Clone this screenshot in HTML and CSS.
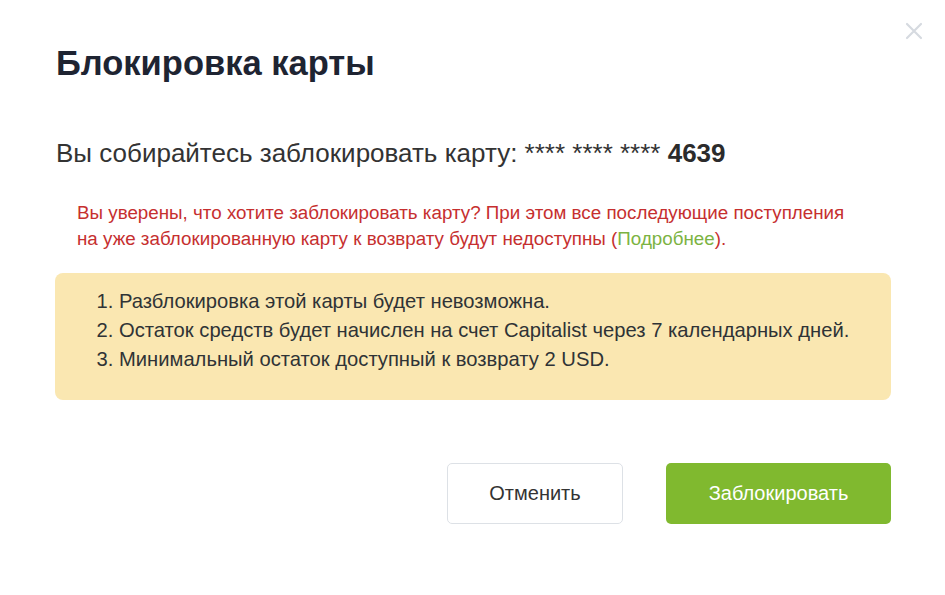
FILE: index.html
```html
<!DOCTYPE html>
<html lang="ru">
<head>
    <meta charset="UTF-8">
    <meta name="viewport" content="width=device-width, initial-scale=1.0">
    <title>Блокировка карты</title>
    <link rel="stylesheet" href="styles.css">
</head>
<body>
    <div class="modal">
        <button type="button" class="close" aria-label="Закрыть">
            <svg width="18" height="18" viewBox="0 0 18 18">
                <path d="M2 2 L16 16 M16 2 L2 16" stroke="#d6dae0" stroke-width="2.2" stroke-linecap="round"/>
            </svg>
        </button>
        <h1>Блокировка карты</h1>
        <p class="lead">Вы собирайтесь заблокировать карту: **** **** **** <b>4639</b></p>
        <p class="warning">Вы уверены, что хотите заблокировать карту? При этом все последующие поступления на уже заблокированную карту к возврату будут недоступны (<a href="#">Подробнее</a>).</p>
        <div class="notice">
            <ol>
                <li>Разблокировка этой карты будет невозможна.</li>
                <li>Остаток средств будет начислен на счет Capitalist через 7 календарных дней.</li>
                <li>Минимальный остаток доступный к возврату 2 USD.</li>
            </ol>
        </div>
        <div class="actions">
            <button type="button" class="btn btn-cancel">Отменить</button>
            <button type="button" class="btn btn-block">Заблокировать</button>
        </div>
    </div>
</body>
</html>
```

FILE: styles.css
```css
body {
    margin: 0;
    font-family: 'Liberation Sans', Arial, sans-serif;
    background-color: white;
    color: #333;
}

.modal {
    position: relative;
    padding: 41px 54px 0 56px;
}

.close {
    position: absolute;
    top: 22px;
    right: 22px;
    background: none;
    border: none;
    padding: 0;
    cursor: pointer;
}

h1 {
    margin: 0;
    font-size: 34.5px;
    line-height: 44px;
    font-weight: bold;
    color: #1e2432;
}

.lead {
    margin: 52px 0 0;
    font-size: 26px;
    line-height: 32px;
    color: #333;
}

.lead b {
    color: #2b2b2b;
}

.warning {
    margin: 31px 0 0;
    padding: 0 25px 0 21px;
    font-size: 18.8px;
    line-height: 26px;
    color: #c62f2f;
}

.warning a {
    color: #7cb342;
    text-decoration: none;
}

.notice {
    margin-top: 21px;
    margin-left: -1px;
    padding: 14px 20px 26px 0;
    background-color: #fae7b1;
    border-radius: 8px;
}

.notice ol {
    margin: 0;
    padding-left: 64px;
    font-size: 20.2px;
    line-height: 29px;
    color: #2f3336;
}

.actions {
    display: flex;
    justify-content: flex-end;
    gap: 43px;
    margin-top: 63px;
}

.btn {
    height: 61px;
    border-radius: 5px;
    font-family: inherit;
    font-size: 20px;
    cursor: pointer;
}

.btn-cancel {
    width: 176px;
    background-color: white;
    border: 1px solid #dde1e6;
    color: #333;
}

.btn-block {
    width: 225px;
    background-color: #80b92f;
    border: none;
    color: white;
}
```
